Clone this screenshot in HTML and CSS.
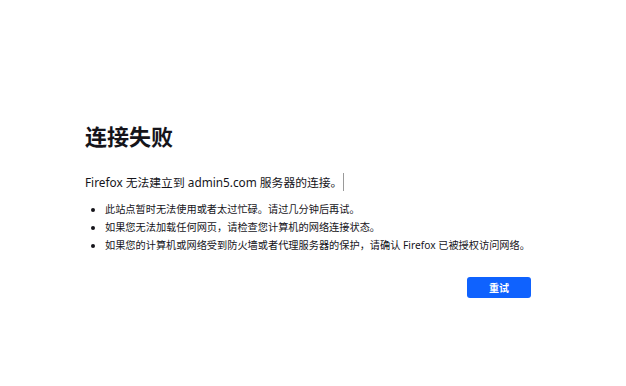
FILE: index.html
```html
<!DOCTYPE html>
<html lang="zh-CN">
<head>
    <meta charset="UTF-8">
    <title>连接失败</title>
    <link rel="stylesheet" href="styles.css">
</head>
<body>
    <div class="error-container">
        <h1 class="title">连接失败</h1>
        <p class="intro">Firefox 无法建立到 admin5.com 服务器的连接。<span class="caret"></span></p>
        <ul class="tips">
            <li>此站点暂时无法使用或者太过忙碌。请过几分钟后再试。</li>
            <li>如果您无法加载任何网页，请检查您计算机的网络连接状态。</li>
            <li>如果您的计算机或网络受到防火墙或者代理服务器的保护，请确认 Firefox 已被授权访问网络。</li>
        </ul>
        <div class="actions">
            <button class="retry-button">重试</button>
        </div>
    </div>
</body>
</html>
```

FILE: styles.css
```css
body {
    margin: 0;
    background: #ffffff;
    color: #15141a;
    font-family: "Noto Sans", "Noto Sans CJK SC", sans-serif;
}

.error-container {
    width: 446px;
    margin-left: 85px;
    padding-top: 118px;
}

.title {
    margin: 0;
    font-size: 22px;
    font-weight: bold;
    line-height: 36px;
}

.intro {
    margin: 18px 0 0;
    font-size: 11.8px;
    line-height: 20px;
}

.caret {
    display: inline-block;
    width: 1px;
    height: 18px;
    margin-left: 1px;
    background: #9a9a9a;
    vertical-align: -4px;
}

.tips {
    margin: 8px 0 0;
    padding-left: 20px;
    font-size: 10.2px;
    line-height: 18px;
}

.actions {
    display: flex;
    justify-content: flex-end;
    margin-top: 23px;
}

.retry-button {
    width: 64px;
    height: 21px;
    background: #0f62fe;
    color: #ffffff;
    border: none;
    border-radius: 3px;
    font-family: inherit;
    font-size: 10px;
    font-weight: bold;
    cursor: pointer;
}
```
